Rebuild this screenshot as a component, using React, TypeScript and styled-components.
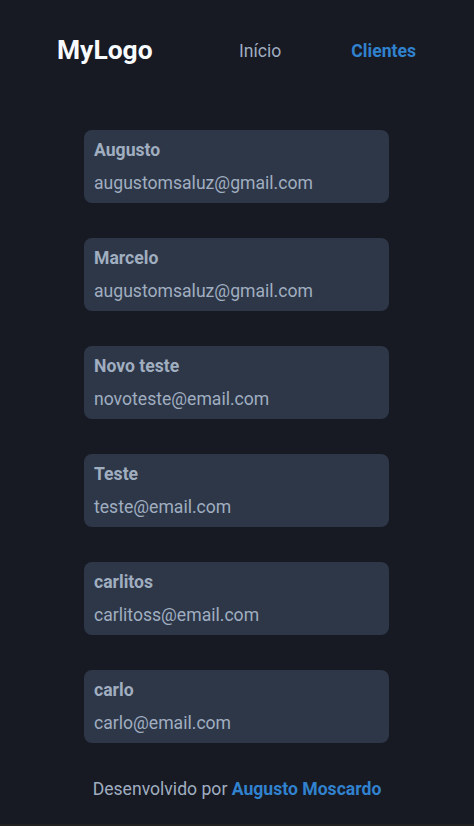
import React from "react";
import styled, { createGlobalStyle } from "styled-components";

const Global = createGlobalStyle`
  html, body { margin: 0; padding: 0; background: #212121; }
  body { font-family: Roboto, "Liberation Sans", sans-serif; }
`;

const Page = styled.div`
  background: #171923;
  min-height: 824px;
  display: flex;
  flex-direction: column;
`;

const Header = styled.header`
  display: flex;
  align-items: center;
  justify-content: space-between;
  padding: 0 58px 0 57px;
  height: 100px;
`;

const Logo = styled.div`
  color: #f7fafc;
  font-size: 26.4px;
  font-weight: 700;
`;

const Nav = styled.nav`
  display: flex;
  gap: 70px;
  padding-top: 2px;
`;

const NavLink = styled.a<{ $active?: boolean }>`
  font-size: 17.6px;
  font-weight: ${(p) => (p.$active ? 700 : 400)};
  color: ${(p) => (p.$active ? "#3182ce" : "#a0aec0")};
  text-decoration: none;
`;

const List = styled.main`
  display: flex;
  flex-direction: column;
  align-items: center;
  gap: 35px;
  padding: 30px 1px 0 0;
`;

const Card = styled.div`
  width: 305px;
  height: 73px;
  box-sizing: border-box;
  background: #2d3748;
  border-radius: 8px;
  padding: 8px 10px;
  display: flex;
  flex-direction: column;
  gap: 8px;
  color: #a0aec0;
`;

const Name = styled.div`
  font-size: 17.6px;
  font-weight: 700;
  line-height: 24px;
`;

const Email = styled.div`
  font-size: 17.6px;
  line-height: 27px;
`;

const Footer = styled.footer`
  text-align: center;
  color: #a0aec0;
  font-size: 17.6px;
  padding-top: 36px;
`;

const Author = styled.a`
  color: #3182ce;
  font-weight: 700;
  text-decoration: none;
`;

const clients = [
  { name: "Augusto", email: "augustomsaluz@gmail.com" },
  { name: "Marcelo", email: "augustomsaluz@gmail.com" },
  { name: "Novo teste", email: "novoteste@email.com" },
  { name: "Teste", email: "teste@email.com" },
  { name: "carlitos", email: "carlitoss@email.com" },
  { name: "carlo", email: "carlo@email.com" },
];

export default function App() {
  return (
    <Page>
      <Global />
      <Header>
        <Logo>MyLogo</Logo>
        <Nav>
          <NavLink href="#">Início</NavLink>
          <NavLink href="#" $active>
            Clientes
          </NavLink>
        </Nav>
      </Header>
      <List>
        {clients.map((c) => (
          <Card key={c.name}>
            <Name>{c.name}</Name>
            <Email>{c.email}</Email>
          </Card>
        ))}
      </List>
      <Footer>
        Desenvolvido por <Author href="#">Augusto Moscardo</Author>
      </Footer>
    </Page>
  );
}
